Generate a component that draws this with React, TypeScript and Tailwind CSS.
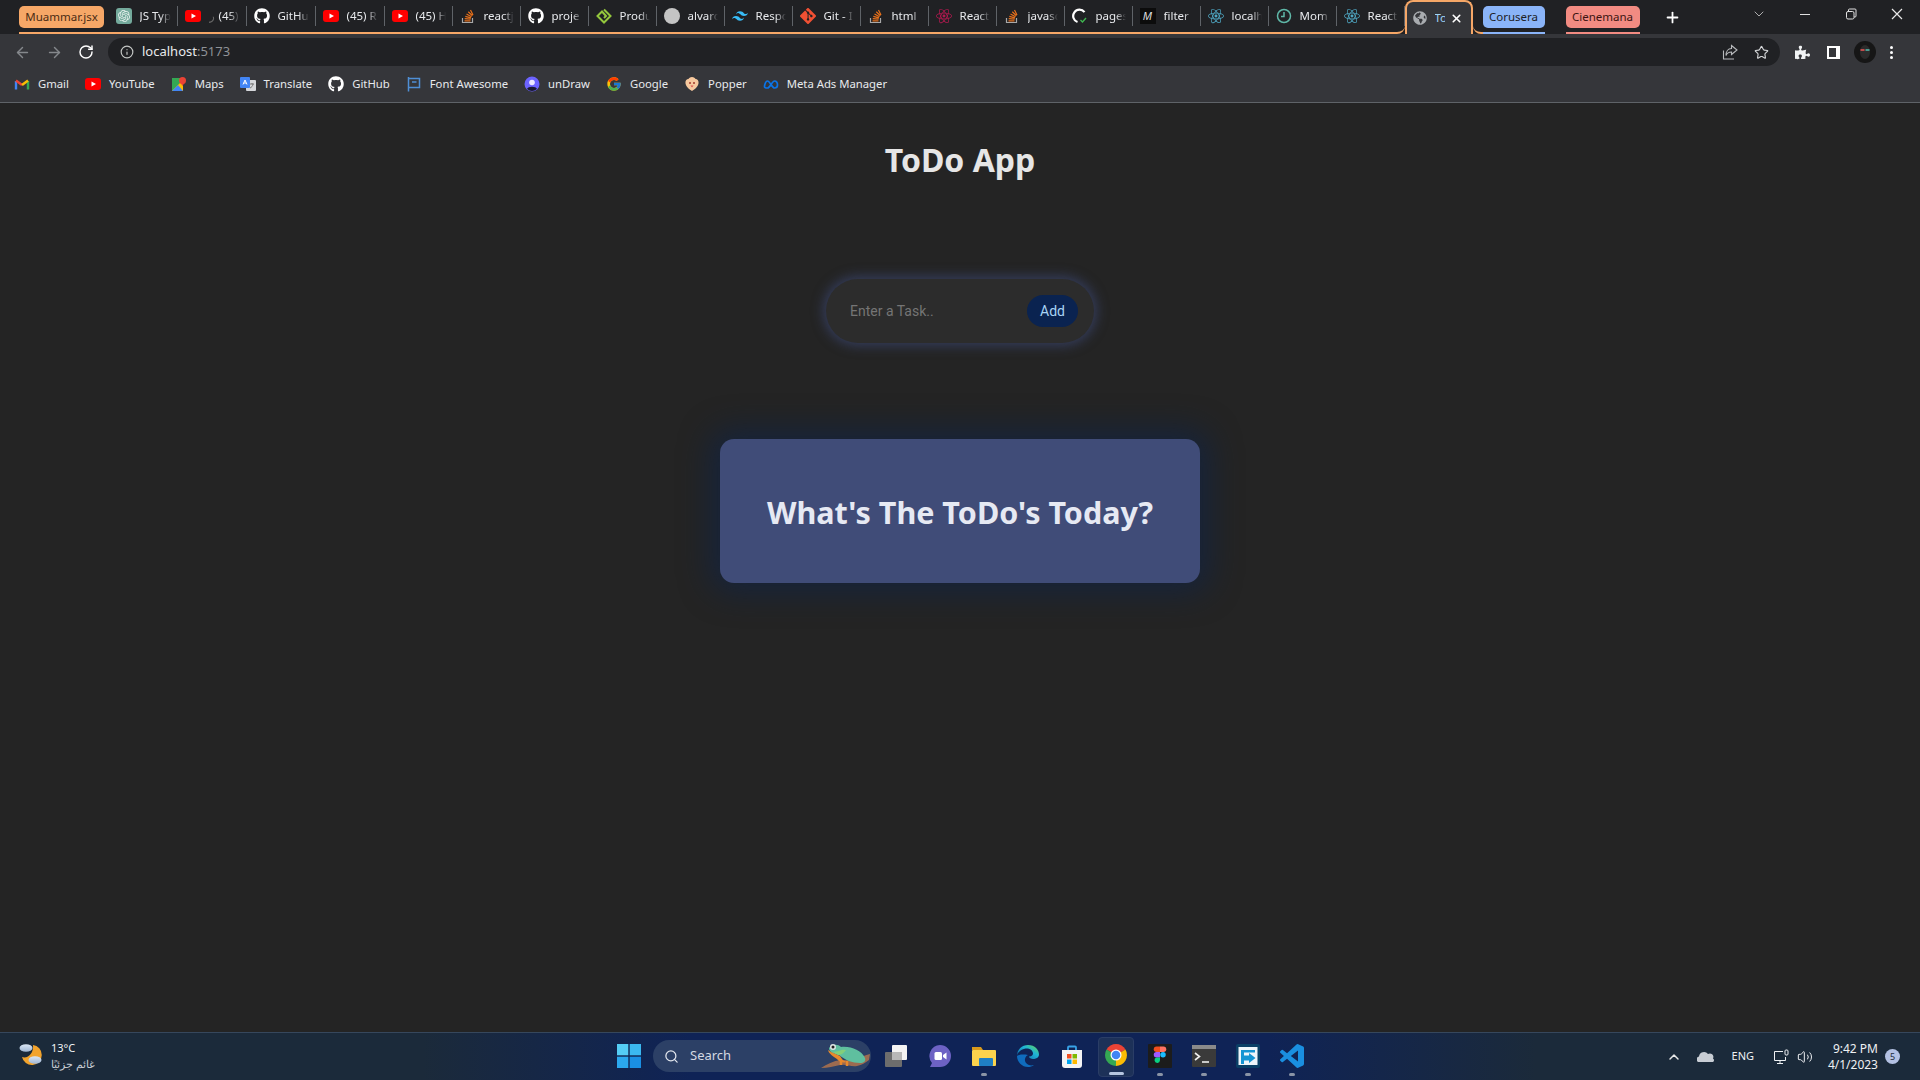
import { ReactNode } from "react";
import { ArrowLeft, ArrowRight, ChevronDown, ChevronUp, Info, Plus, RotateCw, Search, Star, Volume2, X } from "lucide-react";
import { FaGithub, FaGlobeAmericas, FaPuzzlePiece } from "react-icons/fa";
import { FcGoogle } from "react-icons/fc";
import { SiGit, SiOpenai, SiReact, SiTailwindcss } from "react-icons/si";

function YouTubeIcon() {
  return (
    <svg viewBox="0 0 16 16" className="w-4 h-4 shrink-0">
      <rect x="0" y="2" width="16" height="12" rx="3" fill="#f00" />
      <path d="M6.500 5.500 11 8l-4.500 2.500z" fill="#fff" />
    </svg>
  );
}

function StackIcon() {
  return (
    <svg viewBox="0 0 16 16" className="w-4 h-4 shrink-0" fill="none">
      <path d="M2.500 10v4.500h10V10" stroke="#a8a8a8" strokeWidth="1.200" />
      <path d="M4.500 12.800h6M4.700 10.600l5.900.6M5.300 8.300l5.700 1.500M6.500 5.900l5 2.900M8.300 3.800l4.100 4M10.500 2l2.500 5" stroke="#e8701a" strokeWidth="1.200" />
    </svg>
  );
}

function GhIcon() {
  return <FaGithub className="w-4 h-4 shrink-0 text-white" />;
}

function OpenAiIcon() {
  return (
    <span className="w-4 h-4 shrink-0 rounded-[3px] bg-[#74aa9c] flex items-center justify-center">
      <SiOpenai className="w-3 h-3 text-[#e8f2ef]" />
    </span>
  );
}

function ProdIcon() {
  return (
    <svg viewBox="0 0 16 16" className="w-4 h-4 shrink-0" fill="none">
      <path d="M8 1.500 14.500 8 8 14.500 1.500 8 6 3.500 10 8 8 10" stroke="#94c83d" strokeWidth="2" />
    </svg>
  );
}

function PagesIcon() {
  return (
    <svg viewBox="0 0 16 16" className="w-4 h-4 shrink-0" fill="none">
      <path d="M12.500 4.200A6.300 6.300 0 1 0 5.500 14" stroke="#fff" strokeWidth="2.200" />
      <path d="m8.500 12 2 2 3.500-4" stroke="#3fb950" strokeWidth="1.300" />
    </svg>
  );
}

type TabData = { icon: ReactNode; label: string; prefix?: string };

const tabs: TabData[] = [
  { icon: <OpenAiIcon />, label: "JS Typ" },
  { icon: <YouTubeIcon />, label: "(45)", prefix: "ر" },
  { icon: <GhIcon />, label: "GitHu" },
  { icon: <YouTubeIcon />, label: "(45) R" },
  { icon: <YouTubeIcon />, label: "(45) H" },
  { icon: <StackIcon />, label: "reactj" },
  { icon: <GhIcon />, label: "proje" },
  { icon: <ProdIcon />, label: "Produ" },
  { icon: <span className="w-4 h-4 shrink-0 rounded-full bg-[#c4c4c4]" />, label: "alvaro" },
  { icon: <SiTailwindcss className="w-4 h-4 shrink-0 text-[#38bdf8]" />, label: "Respo" },
  { icon: <SiGit className="w-4 h-4 shrink-0 text-[#f05033]" />, label: "Git - I" },
  { icon: <StackIcon />, label: "html" },
  { icon: <SiReact className="w-4 h-4 shrink-0 text-[#b0194f]" />, label: "React" },
  { icon: <StackIcon />, label: "javasc" },
  { icon: <PagesIcon />, label: "pages" },
  {
    icon: (
      <span className="w-4 h-4 shrink-0 bg-[#0c0c0c] text-[#ddd] text-[11px] italic leading-4 text-center">M</span>
    ),
    label: "filter",
  },
  { icon: <SiReact className="w-4 h-4 shrink-0 text-[#4fa8c4]" />, label: "localh" },
  {
    icon: (
      <svg viewBox="0 0 16 16" className="w-4 h-4 shrink-0" fill="none" stroke="#5fb8a8" strokeWidth="1.500">
        <circle cx="8" cy="8" r="6.500" />
        <path d="M8 4v4.500H5" />
      </svg>
    ),
    label: "Mom",
  },
  { icon: <SiReact className="w-4 h-4 shrink-0 text-[#4fa8c4]" />, label: "React" },
];

function Tab({ icon, label, prefix, wide }: TabData & { wide: boolean }) {
  return (
    <div className={`${wide ? "w-[69px]" : "w-[68px]"} h-[32px] flex items-center pl-[7px] shrink-0`}>
      {icon}
      <div className="flex-1 min-w-0 ml-2 mr-[6px] flex gap-1 overflow-hidden whitespace-nowrap text-[11.500px] text-[#e8eaed] [mask-image:linear-gradient(to_right,black_65%,transparent)]">
        {prefix && <span className="text-[#666]">{prefix}</span>}
        <span>{label}</span>
      </div>
      <div className="w-px h-[20px] bg-[#5f6368] shrink-0" />
    </div>
  );
}

function TabStrip() {
  return (
    <div className="h-[34px] bg-[#202124] flex shrink-0 text-[#e8eaed]">
      <div className="ml-[19px] w-[1385.500px] h-[34px] flex border-b-2 border-[#f6a767] rounded-br-[8px]">
        <div className="w-[85px] h-[22px] mt-[6px] mr-[4.500px] rounded-[5px] bg-[#f6a767] text-[#4a2c14] text-[11.500px] flex items-center justify-center shrink-0">
          Muammar.jsx
        </div>
        {tabs.map((t, i) => (
          <Tab key={i} {...t} wide={i < 4} />
        ))}
      </div>
      <div className="w-[68px] h-[34px] bg-[#35363a] border-2 border-b-0 border-[#f6a767] rounded-t-[8px] flex items-center pl-[6px] shrink-0">
        <FaGlobeAmericas className="w-[14px] h-[14px] text-[#a9acb0] shrink-0" />
        <span className="ml-[8px] w-[10px] overflow-hidden text-[11.500px] text-[#9fd3f5]">To</span>
        <X className="ml-[5px] w-[13px] h-[13px] text-white" strokeWidth={3} />
      </div>
      <div className="w-[10px] h-[34px] border-b-2 border-[#f6a767] rounded-bl-[8px] shrink-0" />
      <div className="w-[62px] h-[34px] border-b-2 border-[#8ab4f8] shrink-0">
        <div className="mt-[6px] h-[22px] rounded-[5px] bg-[#8ab4f8] text-[#202124] text-[11.500px] flex items-center justify-center">
          Corusera
        </div>
      </div>
      <div className="ml-[21px] w-[74px] h-[34px] border-b-2 border-[#f28b82] shrink-0">
        <div className="mt-[6px] h-[22px] rounded-[5px] bg-[#f28b82] text-[#3c1512] text-[11.500px] flex items-center justify-center">
          Cienemana
        </div>
      </div>
      <Plus className="ml-[24px] mt-[9px] w-[17px] h-[17px] text-white" strokeWidth={2.500} />
      <ChevronDown className="ml-[70px] mt-[6px] w-[16px] h-[16px] text-[#d0d0d0]" strokeWidth={1.200} />
      <svg viewBox="0 0 46 32" className="ml-[15px] w-[46px] h-[32px]" fill="none" stroke="#e0e0e0">
        <path d="M18 14.500h10" />
      </svg>
      <svg viewBox="0 0 46 32" className="w-[46px] h-[32px]" fill="none" stroke="#e0e0e0">
        <rect x="18.500" y="11.500" width="7.500" height="7.500" rx="1.500" />
        <path d="M20.500 11.500v-1.500a1 1 0 0 1 1-1h5.500a1 1 0 0 1 1 1v6a1 1 0 0 1-1 1h-1" />
      </svg>
      <svg viewBox="0 0 46 32" className="w-[46px] h-[32px]" fill="none" stroke="#e8e8e8" strokeWidth="1.200">
        <path d="m18 9 10 10M28 9 18 19" />
      </svg>
    </div>
  );
}

function Toolbar() {
  return (
    <div className="h-[35px] pt-[1px] bg-[#35363a] flex items-center shrink-0 text-[#e8eaed]">
      <ArrowLeft className="ml-[14px] w-[17px] h-[17px] text-[#85888c]" strokeWidth={2} />
      <ArrowRight className="ml-[15px] w-[17px] h-[17px] text-[#85888c]" strokeWidth={2} />
      <RotateCw className="ml-[15px] w-[16px] h-[16px] text-white" strokeWidth={2.200} />
      <div className="ml-[14px] w-[1672px] h-[28px] rounded-full bg-[#202124] flex items-center">
        <Info className="ml-[12px] w-[14px] h-[14px] text-[#c4c7c5]" />
        <span className="ml-[8px] text-[13px] text-[#e8eaed]">
          localhost<span className="text-[#8f9297]">:5173</span>
        </span>
        <svg viewBox="0 0 16 16" className="ml-auto w-[16px] h-[16px]" fill="none" stroke="#b8babd" strokeWidth="1.100">
          <path d="M1.500 6.500v8.500h10.500" />
          <path d="M9.500 1.500 15 6l-5.500 4.500V8c-3 0-4.500 1-5.500 3.500 0-4 2-7 5.500-7z" />
        </svg>
        <Star className="ml-[16px] mr-[11px] w-[15px] h-[15px] text-[#d4d6d8]" strokeWidth={1.800} />
      </div>
      <FaPuzzlePiece className="ml-[15px] w-[15px] h-[15px] text-[#f1f3f4]" />
      <div className="ml-[17px] w-[13px] h-[13px] border-2 border-r-[4px] border-white" />
      <svg viewBox="0 0 22 22" className="ml-[14px] w-[22px] h-[22px] shrink-0">
        <circle cx="11" cy="11" r="11" fill="#161616" />
        <ellipse cx="11" cy="11" rx="5" ry="7" fill="#2b2b2b" />
        <rect x="6.500" y="8" width="4" height="2" fill="#c04a4a" />
        <rect x="11.500" y="8" width="4" height="2" fill="#4a9a8f" />
      </svg>
      <div className="ml-[14px] flex flex-col gap-[2px]">
        <span className="w-[3px] h-[3px] rounded-full bg-white" />
        <span className="w-[3px] h-[3px] rounded-full bg-white" />
        <span className="w-[3px] h-[3px] rounded-full bg-white" />
      </div>
    </div>
  );
}

const bookmarks: { label: string; icon: ReactNode }[] = [
  {
    label: "Gmail",
    icon: (
      <svg viewBox="0 0 16 16" className="w-4 h-4 shrink-0" fill="none" strokeWidth="2.400">
        <path d="M2 13.500V5" stroke="#4285f4" />
        <path d="M14 13.500V5" stroke="#34a853" />
        <path d="M2 4.500 8 9" stroke="#ea4335" />
        <path d="M8 9l6-4.500" stroke="#fbbc04" />
      </svg>
    ),
  },
  { label: "YouTube", icon: <YouTubeIcon /> },
  {
    label: "Maps",
    icon: (
      <svg viewBox="0 0 16 16" className="w-4 h-4 shrink-0">
        <path d="M1 2h11v13H1z" fill="#34a853" />
        <path d="M1 15 12 4v11z" fill="#fbbc04" />
        <path d="M1 15l6-6 5 6z" fill="#4285f4" />
        <circle cx="11.500" cy="4.500" r="3.500" fill="#ea4335" />
        <path d="m9 6 2.500 4L14 6z" fill="#ea4335" />
      </svg>
    ),
  },
  {
    label: "Translate",
    icon: (
      <svg viewBox="0 0 16 16" className="w-4 h-4 shrink-0">
        <rect x="6" y="4" width="10" height="11" rx="1" fill="#d5d7db" />
        <rect x="0" y="1" width="10" height="11" rx="1" fill="#4285f4" />
        <path d="M3 8.500 5 4l2 4.500M3.800 7h2.400" stroke="#fff" fill="none" />
        <path d="M10 8h4M12 7v1M13 8c-.3 2-1.500 3.500-3 4" stroke="#777" fill="none" />
      </svg>
    ),
  },
  { label: "GitHub", icon: <GhIcon /> },
  {
    label: "Font Awesome",
    icon: (
      <svg viewBox="0 0 16 16" className="w-4 h-4 shrink-0" fill="none" stroke="#4f8fd6" strokeWidth="1.500">
        <path d="M2.500 1v14.500M2.500 2.500h11v9h-11M6 6h4.500" />
      </svg>
    ),
  },
  {
    label: "unDraw",
    icon: (
      <svg viewBox="0 0 16 16" className="w-4 h-4 shrink-0">
        <circle cx="8" cy="8" r="7.500" fill="#6c63ff" />
        <circle cx="8" cy="6.500" r="2.800" fill="#ece9ff" />
        <path d="M3 13c1-3 9-3 10 0a7.500 7.500 0 0 1-10 0z" fill="#1a1a2e" />
      </svg>
    ),
  },
  { label: "Google", icon: <FcGoogle className="w-4 h-4 shrink-0" /> },
  {
    label: "Popper",
    icon: (
      <svg viewBox="0 0 16 16" className="w-4 h-4 shrink-0">
        <path d="M8 1c2 0 3 1 3.500 2 2 0 3.500 2 3 4.500-.5 3-3.500 6-6.500 7.500-3-1.500-6-4.500-6.500-7.500C1 5 2.500 3 4.500 3 5 2 6 1 8 1z" fill="#f7c99e" />
        <circle cx="6" cy="7" r="1" fill="#a3392b" />
        <circle cx="10" cy="7" r="1" fill="#a3392b" />
        <path d="M6.500 9.500h3L8 11.500z" fill="#d9534f" />
      </svg>
    ),
  },
  {
    label: "Meta Ads Manager",
    icon: (
      <svg viewBox="0 0 16 16" className="w-4 h-4 shrink-0" fill="none" stroke="#0a74e8" strokeWidth="1.700">
        <path d="M1.500 11c0-3 1.500-6 3-6 2.500 0 4.500 7 7 7 1.500 0 3-1 3-3 0-2.500-1.500-4-3-4-2.500 0-4.500 7-7 7-2 0-3-.5-3-1z" />
      </svg>
    ),
  },
];

function BookmarksBar() {
  return (
    <div className="h-[34px] bg-[#35363a] border-b border-[#5f6368] pb-[3px] pl-[14px] flex items-center gap-[16px] shrink-0">
      {bookmarks.map((b) => (
        <div key={b.label} className="flex items-center gap-[8px] text-[11.300px] text-[#e8eaed]">
          {b.icon}
          <span>{b.label}</span>
        </div>
      ))}
    </div>
  );
}

function TodoPage() {
  return (
    <main className="flex-1 bg-[#242424] flex flex-col items-center">
      <h1 className="mt-[35px] text-[32px] leading-[44px] font-bold text-[#e6e6e6]">ToDo App</h1>
      <form className="mt-[97px] w-[268px] h-[64px] rounded-full bg-[#2c2c2c] shadow-[0_0_12px_3px_rgba(65,80,135,0.55)] flex items-center pl-[24px] pr-[16px]">
        <input
          placeholder="Enter a Task.."
          className="flex-1 min-w-0 bg-transparent outline-none font-['Roboto',sans-serif] text-[14px] text-white placeholder:text-[#757575]"
        />
        <button
          type="button"
          className="w-[51px] h-[32px] rounded-full bg-[#0a2350] text-[#a8d4f5] font-['Roboto',sans-serif] text-[14px]"
        >
          Add
        </button>
      </form>
      <div className="mt-[96px] w-[480px] h-[144px] rounded-[14px] bg-[#404c78] shadow-[0_0_30px_10px_rgba(16,36,70,0.65)] flex items-center justify-center pt-[2px]">
        <h2 className="text-[30.500px] leading-[44px] font-bold text-[#e6e9f3]">What's The ToDo's Today?</h2>
      </div>
    </main>
  );
}

function FrogIcon() {
  return (
    <svg viewBox="0 0 50 26" className="w-[50px] h-[26px] shrink-0">
      <path d="M0 25c6-4 12-7 20-8 8 0 12 1 16 0 4-3 8-5 13-6l-1 6c-4 3-7 5-12 6-6 1-10-2-17-1-6 1-12 3-19 3z" fill="#9c6b50" />
      <path d="M8 5c3-4 9-4 12-1 10-1 20 3 24 11 1 3-1 5-5 5-8 0-15-3-21-8C13 11 8 9 8 5z" fill="#5fbf9f" />
      <path d="M7 7c4 3 9 4 12 6 2 3 3 5 7 6-4 1-8 0-10-3C12 13 8 11 7 7z" fill="#e8892c" />
      <path d="M12 9c6 0 8-3 13-2-2 3-5 5-8 5z" fill="#83cf7a" />
      <circle cx="12" cy="4" r="3" fill="#dfe7e5" />
      <circle cx="12" cy="4" r="1.500" fill="#222" />
      <path d="M20 17v5M26 18v5" stroke="#e8892c" strokeWidth="2.500" />
    </svg>
  );
}

function TaskIcon({ children, dot, active }: { children: ReactNode; dot?: boolean; active?: boolean }) {
  return (
    <div className="w-[44px] h-[44px] flex items-center justify-center">
      <div
        className={`w-[36px] h-[40px] flex flex-col items-center justify-end pb-[1px] gap-[5px] rounded-[4px] ${
          active ? "bg-[#1d3158] border border-[#2a3d66]" : ""
        }`}
      >
        {children}
        {active ? (
          <div className="w-[15px] h-[3px] rounded-full bg-[#b5c5e0]" />
        ) : dot ? (
          <div className="w-[6px] h-[3px] rounded-full bg-[#8a94a6]" />
        ) : (
          <div className="h-[3px]" />
        )}
      </div>
    </div>
  );
}

function Taskbar() {
  return (
    <footer className="h-[48px] shrink-0 border-t border-[#36475c] bg-[linear-gradient(to_right,#1b2a3a_0%,#1b2a3a_22%,#0f2356_36%,#0f2356_66%,#1b2a3a_80%,#1b2a3a_100%)] flex items-center text-white">
      <svg viewBox="0 0 24 24" className="ml-[19px] mb-[5px] w-[24px] h-[24px] shrink-0">
        <defs>
          <linearGradient id="cloud" x1="0" y1="0" x2="0" y2="1">
            <stop offset="0" stopColor="#dbe6f4" />
            <stop offset="1" stopColor="#9fb6d3" />
          </linearGradient>
        </defs>
        <path d="M14 3a10 10 0 1 1-11 12c6 2 12-4 11-12z" fill="#f2a32c" />
        <ellipse cx="7" cy="6" rx="6.500" ry="3.800" fill="url(#cloud)" />
        <ellipse cx="16" cy="18" rx="6.500" ry="3.800" fill="url(#cloud)" />
      </svg>
      <div className="ml-[8px] mb-[2px] w-[60px] flex flex-col text-[11px] leading-[16px] shrink-0">
        <span className="text-[#f0f2f5]">13°C</span>
        <span className="text-[#c6cbd2]">غائم جزئيًا</span>
      </div>

      <svg viewBox="0 0 24 24" className="ml-[506px] mb-[2px] w-[24px] h-[24px] shrink-0">
        <rect x="0" y="0" width="11.300" height="11.300" fill="#55cdf5" />
        <rect x="12.700" y="0" width="11.300" height="11.300" fill="#3bb8f0" />
        <rect x="0" y="12.700" width="11.300" height="11.300" fill="#2ba8ee" />
        <rect x="12.700" y="12.700" width="11.300" height="11.300" fill="#1a8fe3" />
      </svg>
      <div className="ml-[12px] mb-[1px] w-[218px] h-[32px] rounded-full bg-[#2c4066] flex items-center pl-[11px] shrink-0">
        <Search className="w-[15px] h-[15px] text-[#e4e8ef]" strokeWidth={2} />
        <span className="ml-[11px] text-[13px] text-[#d4d9e2]">Search</span>
        <div className="ml-auto">
          <FrogIcon />
        </div>
      </div>

      <div className="ml-[3px] flex items-center shrink-0">
        <TaskIcon>
          <svg viewBox="0 0 24 24" className="w-[24px] h-[24px]">
            <rect x="8" y="1" width="15" height="15" rx="1" fill="#f4f4f4" />
            <rect x="1" y="8" width="17" height="15" rx="1" fill="#6d6d6d" />
            <rect x="8" y="8" width="10" height="8" fill="#b8b8b8" />
          </svg>
        </TaskIcon>
        <TaskIcon>
          <svg viewBox="0 0 24 24" className="w-[24px] h-[24px]">
            <path d="M12 1a11 11 0 0 1 0 22H2l2-4A11 11 0 0 1 12 1z" fill="#6d62c4" />
            <rect x="6.500" y="8" width="7.500" height="8" rx="1.500" fill="#fff" />
            <path d="m15 11 3.500-2.500v7L15 13z" fill="#fff" />
          </svg>
        </TaskIcon>
        <TaskIcon dot>
          <svg viewBox="0 0 24 24" className="w-[24px] h-[24px]">
            <path d="M0 3h9l2 3H0z" fill="#d99a1c" />
            <rect x="0" y="6" width="24" height="16" rx="1" fill="#fcd34d" />
            <rect x="7" y="14" width="14" height="8" rx="1" fill="#1f7fc4" />
          </svg>
        </TaskIcon>
        <TaskIcon>
          <svg viewBox="0 0 24 24" className="w-[24px] h-[24px]" fill="none">
            <defs>
              <linearGradient id="edge" x1="0" y1="1" x2="1" y2="0">
                <stop offset="0" stopColor="#0c5aa6" />
                <stop offset="0.600" stopColor="#1fb5d6" />
                <stop offset="1" stopColor="#6ad84f" />
              </linearGradient>
            </defs>
            <path d="M12 1c7 0 11 5 11 9.500 0 3-3 4.500-6 4.500-2 0-4-1-4-2.500 3 0 4-1.500 4-3C17 6 13 4 9.500 4.500 5 5.500 1.500 8 1 12 1 5.500 6 1 12 1z" fill="url(#edge)" />
            <path d="M1 12c0 6 5 11 11 11 2 0 4-.5 6-2-5 1.500-8-1-9-4-.5-2 .5-5 3-6-6-1-10 0-11 1z" fill="#0f6cbd" />
          </svg>
        </TaskIcon>
        <TaskIcon>
          <svg viewBox="0 0 24 24" className="w-[24px] h-[24px]" fill="none">
            <path d="M8 7V3.500a1 1 0 0 1 1-1h6a1 1 0 0 1 1 1V7" stroke="#38a3e8" strokeWidth="1.800" />
            <path d="M2 6h20v15a3 3 0 0 1-3 3H5a3 3 0 0 1-3-3z" fill="#f4f4f4" />
            <rect x="7" y="10" width="4.500" height="4.500" fill="#f25022" />
            <rect x="12.500" y="10" width="4.500" height="4.500" fill="#7fba00" />
            <rect x="7" y="15.500" width="4.500" height="4.500" fill="#00a4ef" />
            <rect x="12.500" y="15.500" width="4.500" height="4.500" fill="#ffb900" />
          </svg>
        </TaskIcon>
        <TaskIcon active>
          <svg viewBox="0 0 24 24" className="w-[24px] h-[24px]">
            <path d="M2.500 6.500A11 11 0 0 1 21.500 6.500L12 12z" fill="#ea4335" />
            <path d="M21.500 6.500A11 11 0 0 1 12 23L12 12z" fill="#fbbc04" />
            <path d="M12 23A11 11 0 0 1 2.500 6.500L12 12z" fill="#34a853" />
            <circle cx="12" cy="12" r="5.500" fill="#fff" />
            <circle cx="12" cy="12" r="4.300" fill="#4285f4" />
          </svg>
        </TaskIcon>
        <TaskIcon dot>
          <svg viewBox="0 0 24 24" className="w-[24px] h-[24px]">
            <rect x="0" y="0" width="24" height="24" rx="1" fill="#1c1c1c" />
            <path d="M8.500 2.500H12v5.500H8.500a2.750 2.750 0 0 1 0-5.500z" fill="#f24e1e" />
            <path d="M12 2.500h3.500a2.750 2.750 0 0 1 0 5.500H12z" fill="#ff7262" />
            <path d="M8.500 8H12v5.500H8.500a2.750 2.750 0 0 1 0-5.500z" fill="#a259ff" />
            <circle cx="15" cy="10.750" r="2.750" fill="#1abcfe" />
            <path d="M8.500 13.500H12v2.750a2.750 2.750 0 1 1-3.500-2.750z" fill="#0acf83" />
          </svg>
        </TaskIcon>
        <TaskIcon dot>
          <svg viewBox="0 0 24 24" className="w-[24px] h-[24px]" fill="none">
            <rect x="0" y="1" width="24" height="22" rx="1" fill="#3a3a3a" />
            <rect x="0" y="1" width="24" height="4" fill="#8a8a8a" />
            <path d="m3 9 4.500 3.500L3 16" stroke="#eee" strokeWidth="1.600" />
            <path d="M10 18h7" stroke="#eee" strokeWidth="1.600" />
          </svg>
        </TaskIcon>
        <TaskIcon dot>
          <svg viewBox="0 0 24 24" className="w-[24px] h-[24px]">
            <rect x="0" y="0" width="24" height="24" rx="2" fill="#0a3f66" />
            <rect x="2.500" y="3" width="19" height="18" fill="#eef5fa" />
            <path d="M5 6h14v2.500H8v3h5V9l6.500 5-6.500 5v-2.500H8V20H5z" fill="#1595d3" />
          </svg>
        </TaskIcon>
        <TaskIcon dot>
          <svg viewBox="0 0 24 24" className="w-[24px] h-[24px]">
            <path
              d="M23.150 2.587 18.210.21a1.494 1.494 0 0 0-1.705.29l-9.460 8.630-4.120-3.128a.999.999 0 0 0-1.276.057L.327 7.261A1 1 0 0 0 .326 8.740L3.899 12 .326 15.260a1 1 0 0 0 .001 1.479L1.650 17.940a.999.999 0 0 0 1.276.057l4.120-3.128 9.460 8.630a1.492 1.492 0 0 0 1.704.29l4.942-2.377A1.500 1.500 0 0 0 24 20.060V3.939a1.500 1.500 0 0 0-.850-1.352zm-5.146 14.861L10.826 12l7.178-5.448v10.896z"
              fill="#1a8fe0"
            />
          </svg>
        </TaskIcon>
      </div>

      <ChevronUp className="ml-auto w-[16px] h-[16px] text-[#e8e8e8]" strokeWidth={2.200} />
      <svg viewBox="0 0 18 12" className="ml-[15px] w-[18px] h-[12px] shrink-0">
        <path d="M1 11a3 3 0 0 1 1-5.500A5 5 0 0 1 11 3a3.500 3.500 0 0 1 5 4.500 2 2 0 0 1 0 3.500z" fill="#c8cdd4" />
      </svg>
      <span className="ml-[17px] text-[11px] text-[#eef0f3]">ENG</span>
      <svg viewBox="0 0 16 16" className="ml-[19px] w-[16px] h-[16px] shrink-0" fill="none" stroke="#eef0f3">
        <path d="M10 2.500H1.500v9h11V8M7 11.500v3M4 14.500h6" />
        <rect x="12" y="1" width="3" height="5" rx="1" />
      </svg>
      <Volume2 className="ml-[8px] w-[16px] h-[16px] text-[#eef0f3]" strokeWidth={1.500} />
      <div className="ml-[8px] w-[57px] flex flex-col items-end text-[12px] leading-[16px] text-[#eef0f3] shrink-0">
        <span>9:42 PM</span>
        <span>4/1/2023</span>
      </div>
      <div className="ml-[7px] mr-[20px] w-[15px] h-[15px] rounded-full bg-[#b3c1e3] text-[#1b2a3a] text-[9px] flex items-center justify-center">
        5
      </div>
    </footer>
  );
}

function App() {
  return (
    <div className="w-[1920px] h-screen overflow-hidden flex flex-col font-['Noto_Sans','Liberation_Sans',sans-serif]">
      <TabStrip />
      <Toolbar />
      <BookmarksBar />
      <TodoPage />
      <Taskbar />
    </div>
  );
}

export default App;
